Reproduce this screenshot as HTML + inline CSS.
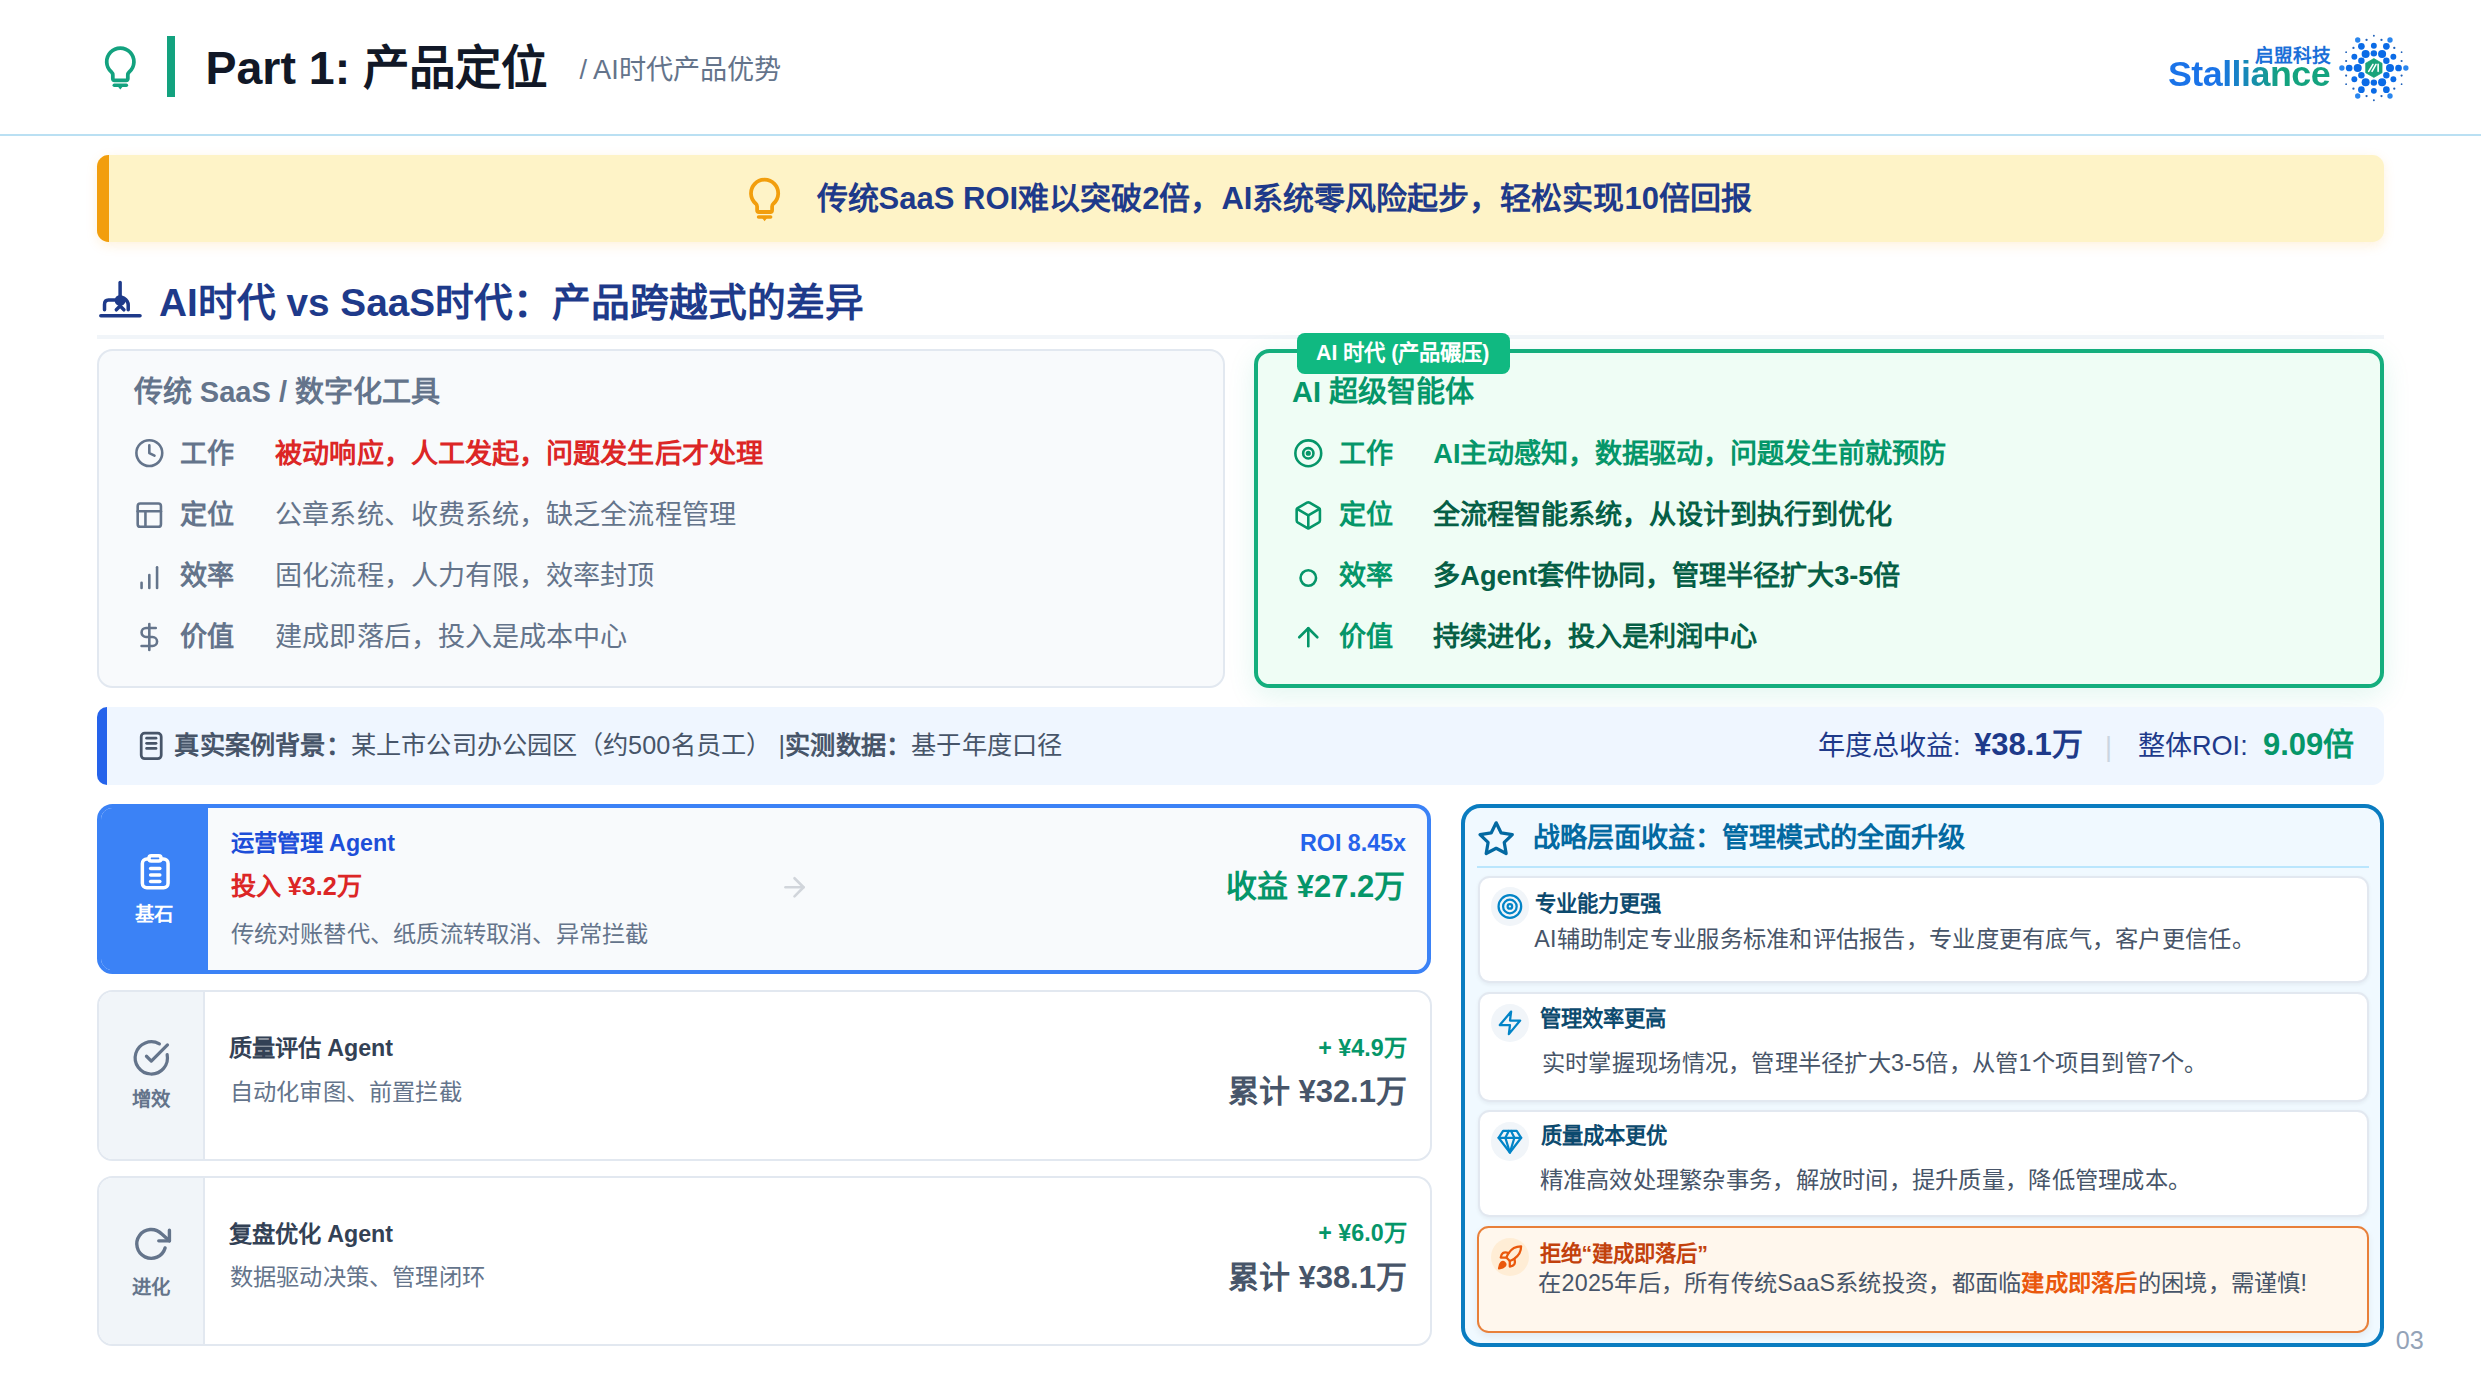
<!DOCTYPE html>
<html lang="zh-CN">
<head>
<meta charset="utf-8">
<style>
html,body{margin:0;padding:0;background:#fff;overflow:hidden;}
body{width:2481px;height:1395px;}
#s{position:relative;width:1280px;height:720px;zoom:1.93828;font-family:"Liberation Sans",sans-serif;color:#334155;}
.a{position:absolute;}
.t{position:absolute;line-height:1;white-space:nowrap;}
.b{font-weight:bold;}
#ov{position:absolute;left:0;top:0;width:1280px;height:719.7px;pointer-events:none;}
</style>
</head>
<body>
<div id="s">
<!-- HEADER -->
<div class="a" style="left:0;top:69px;width:1280px;height:1px;background:#bae0f3"></div>
<div class="a" style="left:86.2px;top:18.5px;width:4px;height:31.5px;background:#13a27f"></div>
<div class="t b" style="left:106px;top:23.1px;font-size:24px;color:#111827">Part 1: 产品定位</div>
<div class="t" style="left:299px;top:28.8px;font-size:14px;color:#64748b">/ AI时代产品优势</div>

<!-- BANNER -->
<div class="a" style="left:50px;top:80px;width:1180px;height:45px;background:#fef3c7;border-radius:6px;box-shadow:0 2px 6px rgba(245,158,11,0.13)"></div>
<div class="a" style="left:50px;top:80px;width:6px;height:45px;background:#f29e0d;border-radius:6px 0 0 6px"></div>
<div class="t b" style="left:421.3px;top:94.3px;font-size:16px;color:#1e3a8a">传统SaaS ROI难以突破2倍，AI系统零风险起步，轻松实现10倍回报</div>

<!-- SECTION TITLE -->
<div class="t b" style="left:82px;top:146.5px;font-size:20px;color:#1e3a8a">AI时代 vs SaaS时代：产品跨越式的差异</div>
<div class="a" style="left:50px;top:172.8px;width:1180px;height:2px;background:#f1f5f9"></div>

<!-- LEFT CARD -->
<div class="a" style="left:50px;top:180.3px;width:580px;height:172.7px;background:#f8fafc;border:1.05px solid #e2e8f0;border-radius:8px"></div>
<div class="t b" style="left:69px;top:195.2px;font-size:15px;color:#64748b">传统 SaaS / 数字化工具</div>
<div class="t b" style="left:93px;top:226.9px;font-size:14px;color:#64748b">工作</div>
<div class="t b" style="left:142px;top:226.9px;font-size:14px;color:#dc2626;letter-spacing:0.05px">被动响应，人工发起，问题发生后才处理</div>
<div class="t b" style="left:93px;top:258.5px;font-size:14px;color:#64748b">定位</div>
<div class="t" style="left:142px;top:258.5px;font-size:14px;color:#64748b;letter-spacing:0.05px">公章系统、收费系统，缺乏全流程管理</div>
<div class="t b" style="left:93px;top:290.0px;font-size:14px;color:#64748b">效率</div>
<div class="t" style="left:142px;top:290.0px;font-size:14px;color:#64748b;letter-spacing:0.05px">固化流程，人力有限，效率封顶</div>
<div class="t b" style="left:93px;top:321.5px;font-size:14px;color:#64748b">价值</div>
<div class="t" style="left:142px;top:321.5px;font-size:14px;color:#64748b;letter-spacing:0.05px">建成即落后，投入是成本中心</div>

<!-- RIGHT CARD -->
<div class="a" style="left:647px;top:180.3px;width:578.8px;height:170.3px;background:#effdf5;border:2.1px solid #14ae7d;border-radius:8px;box-shadow:0 4px 14px rgba(16,185,129,0.12)"></div>
<div class="a" style="left:669px;top:172px;width:110px;height:20.8px;background:#10b981;border-radius:4px"></div>
<div class="t b" style="left:679px;top:176.8px;font-size:11px;color:#fff">AI 时代 (产品碾压)</div>
<div class="t b" style="left:666.6px;top:195.2px;font-size:15px;color:#059669">AI 超级智能体</div>
<div class="t b" style="left:690.6px;top:226.9px;font-size:14px;color:#059669">工作</div>
<div class="t b" style="left:739.5px;top:226.9px;font-size:14px;color:#059669">AI主动感知，数据驱动，问题发生前就预防</div>
<div class="t b" style="left:690.6px;top:258.5px;font-size:14px;color:#059669">定位</div>
<div class="t b" style="left:739.5px;top:258.5px;font-size:14px;color:#065f46">全流程智能系统，从设计到执行到优化</div>
<div class="t b" style="left:690.6px;top:290.0px;font-size:14px;color:#059669">效率</div>
<div class="t b" style="left:739.5px;top:290.0px;font-size:14px;color:#065f46">多Agent套件协同，管理半径扩大3-5倍</div>
<div class="t b" style="left:690.6px;top:321.5px;font-size:14px;color:#059669">价值</div>
<div class="t b" style="left:739.5px;top:321.5px;font-size:14px;color:#065f46">持续进化，投入是利润中心</div>

<!-- CASE BAR -->
<div class="a" style="left:50px;top:364.7px;width:1180px;height:40.1px;background:#eff6ff;border-radius:6px"></div>
<div class="a" style="left:50px;top:364.7px;width:5px;height:40.1px;background:#2563eb;border-radius:6px 0 0 6px"></div>
<div class="t" style="left:90px;top:378px;font-size:13px;color:#475569;letter-spacing:0.1px"><span class="b" style="color:#475569">真实案例背景：</span>某上市公司办公园区（约500名员工） |<span class="b" style="color:#475569">实测数据：</span>基于年度口径</div>
<div class="t" style="left:938px;top:377.6px;font-size:14px;color:#1e3a8a">年度总收益: </div>
<div class="t b" style="left:1018.5px;top:376.1px;font-size:16px;color:#1e3a8a">¥38.1万</div>
<div class="t" style="left:1086px;top:378px;font-size:14px;color:#cbd5e1">|</div>
<div class="t" style="left:1103px;top:377.6px;font-size:14px;color:#1e3a8a">整体ROI: </div>
<div class="t b" style="left:1167.5px;top:376.1px;font-size:16px;color:#059669">9.09倍</div>

<!-- AGENT CARD 1 -->
<div class="a" style="left:50px;top:414.9px;width:684px;height:83.5px;background:#f8fafc;border:2.1px solid #3b82f6;border-radius:8px;overflow:hidden">
  <div class="a" style="left:0;top:0;width:55.2px;height:100%;background:#3b82f6"></div>
</div>
<div class="t b" style="left:69.4px;top:467.1px;font-size:10px;color:#fff">基石</div>
<div class="t b" style="left:119px;top:429.2px;font-size:12px;color:#1d4ed8">运营管理 Agent</div>
<div class="t b" style="left:119px;top:450.7px;font-size:13px;color:#dc2626">投入 ¥3.2万</div>
<div class="t" style="left:119px;top:476.3px;font-size:12px;color:#64748b;letter-spacing:0.11px">传统对账替代、纸质流转取消、异常拦截</div>
<div class="t b" style="right:554.6px;top:429.2px;font-size:12px;color:#2563eb;text-align:right">ROI 8.45x</div>
<div class="t b" style="right:555px;top:449.3px;font-size:16px;color:#059669;text-align:right">收益 ¥27.2万</div>

<!-- AGENT CARD 2 -->
<div class="a" style="left:50px;top:511px;width:686.5px;height:85.7px;background:#fff;border:1.05px solid #e2e8f0;border-radius:8px;overflow:hidden">
  <div class="a" style="left:0;top:0;width:53.7px;height:100%;background:#f1f5f9;border-right:1.05px solid #e2e8f0"></div>
</div>
<div class="t b" style="left:68.2px;top:562.6px;font-size:10px;color:#64748b">增效</div>
<div class="t b" style="left:118px;top:535.1px;font-size:12px;color:#334155">质量评估 Agent</div>
<div class="t" style="left:118.5px;top:557.5px;font-size:12px;color:#64748b;letter-spacing:0.11px">自动化审图、前置拦截</div>
<div class="t b" style="right:554.3px;top:534.8px;font-size:12px;color:#059669">+ ¥4.9万</div>
<div class="t b" style="right:554.1px;top:555.2px;font-size:16px;color:#475569">累计 ¥32.1万</div>

<!-- AGENT CARD 3 -->
<div class="a" style="left:50px;top:606.7px;width:686.5px;height:85.8px;background:#fff;border:1.05px solid #e2e8f0;border-radius:8px;overflow:hidden">
  <div class="a" style="left:0;top:0;width:53.7px;height:100%;background:#f1f5f9;border-right:1.05px solid #e2e8f0"></div>
</div>
<div class="t b" style="left:68.2px;top:659.1px;font-size:10px;color:#64748b">进化</div>
<div class="t b" style="left:118px;top:631px;font-size:12px;color:#334155">复盘优化 Agent</div>
<div class="t" style="left:118.5px;top:653.3px;font-size:12px;color:#64748b;letter-spacing:0.11px">数据驱动决策、管理闭环</div>
<div class="t b" style="right:554.3px;top:630.6px;font-size:12px;color:#059669">+ ¥6.0万</div>
<div class="t b" style="right:554.1px;top:651.2px;font-size:16px;color:#475569">累计 ¥38.1万</div>

<!-- RIGHT PANEL -->
<div class="a" style="left:754px;top:414.7px;width:471.9px;height:275.9px;background:#f0f9ff;border:2.1px solid #0a7cc0;border-radius:10px"></div>
<div class="t b" style="left:791px;top:425px;font-size:14px;color:#0369a1">战略层面收益：管理模式的全面升级</div>
<div class="a" style="left:762px;top:446.7px;width:460px;height:1px;background:#bae6fd"></div>

<div class="a" style="left:762.4px;top:451.7px;width:458px;height:53.2px;background:#fff;box-shadow:0 1px 2px rgba(15,23,42,0.05);border:1.05px solid #e2e8f0;border-radius:6px"></div>
<div class="a" style="left:769.1px;top:457.8px;width:19.8px;height:19.8px;background:#f1f5f9;border-radius:50%"></div>
<div class="t b" style="left:792px;top:461px;font-size:11px;color:#0c4a6e">专业能力更强</div>
<div class="t" style="left:791.5px;top:478.7px;font-size:12px;color:#475569;letter-spacing:0.14px">AI辅助制定专业服务标准和评估报告，专业度更有底气，客户更信任。</div>

<div class="a" style="left:762.4px;top:511.8px;width:458px;height:54.6px;background:#fff;box-shadow:0 1px 2px rgba(15,23,42,0.05);border:1.05px solid #e2e8f0;border-radius:6px"></div>
<div class="a" style="left:769.1px;top:518px;width:19.8px;height:19.8px;background:#f1f5f9;border-radius:50%"></div>
<div class="t b" style="left:794.5px;top:520.8px;font-size:11px;color:#0c4a6e">管理效率更高</div>
<div class="t" style="left:795.5px;top:542.6px;font-size:12px;color:#475569;letter-spacing:0.14px">实时掌握现场情况，管理半径扩大3-5倍，从管1个项目到管7个。</div>

<div class="a" style="left:762.4px;top:572.6px;width:458px;height:53.4px;background:#fff;box-shadow:0 1px 2px rgba(15,23,42,0.05);border:1.05px solid #e2e8f0;border-radius:6px"></div>
<div class="a" style="left:769.1px;top:579.1px;width:19.8px;height:19.8px;background:#f1f5f9;border-radius:50%"></div>
<div class="t b" style="left:795px;top:580.9px;font-size:11px;color:#0c4a6e">质量成本更优</div>
<div class="t" style="left:794.3px;top:602.9px;font-size:12px;color:#475569;letter-spacing:0.14px">精准高效处理繁杂事务，解放时间，提升质量，降低管理成本。</div>

<div class="a" style="left:761.9px;top:632.6px;width:458.5px;height:53.3px;background:#fff7ed;border:1.05px solid #e8803a;box-shadow:0 2px 4px rgba(15,23,42,0.06);border-radius:6px"></div>
<div class="a" style="left:769.1px;top:638.5px;width:19.8px;height:19.8px;background:#ffedd5;border-radius:50%"></div>
<div class="t b" style="left:794.3px;top:641.7px;font-size:11px;color:#c2410c">拒绝“建成即落后”</div>
<div class="t" style="left:793.6px;top:656.4px;font-size:12px;color:#475569;letter-spacing:0.14px">在2025年后，所有传统SaaS系统投资，都面临<span class="b" style="color:#ea580c">建成即落后</span>的困境，需谨慎!</div>

<div class="t" style="left:1236px;top:685px;font-size:13px;color:#94a3b8">03</div>

<!-- LOGO TEXT -->
<div class="t b" style="left:1163.3px;top:24px;font-size:9.65px;color:#1a6fd8">启盟科技</div>
<div class="t b" style="left:1118.5px;top:29.3px;font-size:18.5px;letter-spacing:-0.27px;background:linear-gradient(90deg,#1a73e8 0%,#1a73e8 30%,#14a37f 70%,#14a37f 100%);-webkit-background-clip:text;background-clip:text;color:transparent">Stalliance</div>

<!-- ICON OVERLAY (target px coordinates) -->
<svg id="ov" viewBox="0 0 2481 1395">
<g transform="translate(103,45)"><path d="M9.8 33.6 V30 Q9.8 28.3 8.3 26.9 A13.6 13.6 0 1 1 26.3 26.9 Q24.8 28.3 24.8 30 V33.6 Q24.8 35.4 23 35.4 H11.6 Q9.8 35.4 9.8 33.6 Z" fill="none" stroke="#13a27f" stroke-width="3.76" stroke-linejoin="round"/><rect x="9.5" y="38.6" width="15.6" height="3.5" rx="1.75" fill="#13a27f"/><path d="M14.8 41.5 H19.8 L17.3 44.6 Z" fill="#13a27f"/></g>
<g transform="translate(747.3,176.6)"><path d="M9.8 33.6 V30 Q9.8 28.3 8.3 26.9 A13.6 13.6 0 1 1 26.3 26.9 Q24.8 28.3 24.8 30 V33.6 Q24.8 35.4 23 35.4 H11.6 Q9.8 35.4 9.8 33.6 Z" fill="none" stroke="#f29e0d" stroke-width="3.76" stroke-linejoin="round"/><rect x="9.5" y="38.6" width="15.6" height="3.5" rx="1.75" fill="#f29e0d"/><path d="M14.8 41.5 H19.8 L17.3 44.6 Z" fill="#f29e0d"/></g>
<g fill="none" stroke="#1e3a8a" stroke-width="3.5" stroke-linecap="round" stroke-linejoin="round"><path d="M120.1 282.4 V295.3"/><path d="M115.3 300.1 H108.5 Q104.5 300.1 104.5 304.5 V309.8"/><path d="M124 298.2 Q128.2 301 128.2 305 V309.8"/><path d="M116.3 309.8 L120.1 306 L123.9 309.8"/><path d="M100.8 315.7 H140"/></g><circle cx="120.1" cy="300.4" r="5.4" fill="#1e3a8a"/>
<g transform="translate(133.79376000000002,437.59376000000003) scale(1.2921866666666666)" fill="none" stroke="#64748b" stroke-width="2" stroke-linecap="round" stroke-linejoin="round"><circle cx="12" cy="12" r="10"/><polyline points="12 6 12 12 16 14"/></g>
<g transform="translate(133.79376000000002,499.69376000000005) scale(1.2921866666666666)" fill="none" stroke="#64748b" stroke-width="2" stroke-linecap="round" stroke-linejoin="round"><rect x="3" y="3" width="18" height="18" rx="2"/><path d="M3 9h18"/><path d="M9 21V9"/></g>
<g transform="translate(133.79376000000002,562.09376) scale(1.2921866666666666)" fill="none" stroke="#64748b" stroke-width="2" stroke-linecap="round" stroke-linejoin="round"><path d="M12 20V10"/><path d="M18 20V4"/><path d="M6 20v-4"/></g>
<g transform="translate(133.79376000000002,621.49376) scale(1.2921866666666666)" fill="none" stroke="#64748b" stroke-width="2" stroke-linecap="round" stroke-linejoin="round"><path d="M12 2v20"/><path d="M17 5H9.5a3.5 3.5 0 0 0 0 7h5a3.5 3.5 0 0 1 0 7H6"/></g>
<g transform="translate(1292.79376,437.79376) scale(1.2921866666666666)" fill="none" stroke="#059669" stroke-width="2" stroke-linecap="round" stroke-linejoin="round"><circle cx="12" cy="12" r="10"/><circle cx="12" cy="12" r="4"/><circle cx="12" cy="12" r="1" fill="#059669"/></g>
<g transform="translate(1292.79376,499.79375999999996) scale(1.2921866666666666)" fill="none" stroke="#059669" stroke-width="2" stroke-linecap="round" stroke-linejoin="round"><path d="M21 8a2 2 0 0 0-1-1.73l-7-4a2 2 0 0 0-2 0l-7 4A2 2 0 0 0 3 8v8a2 2 0 0 0 1 1.73l7 4a2 2 0 0 0 2 0l7-4A2 2 0 0 0 21 16Z"/><path d="m3.3 7 8.7 5 8.7-5"/><path d="M12 22V12"/></g>
<g transform="translate(1292.79376,562.49376) scale(1.2921866666666666)" fill="none" stroke="#059669" stroke-width="2" stroke-linecap="round" stroke-linejoin="round"><circle cx="12" cy="12" r="6"/></g>
<g transform="translate(1292.79376,621.7937599999999) scale(1.2921866666666666)" fill="none" stroke="#059669" stroke-width="2" stroke-linecap="round" stroke-linejoin="round"><path d="m5 12 7-7 7 7"/><path d="M12 19V5"/></g>
<g fill="none" stroke="#475569" stroke-width="2.74" stroke-linecap="round"><rect x="141.2" y="733.2" width="20" height="25.5" rx="3.5"/><path d="M146.6 738.2 H156"/><path d="M146.6 743.3 H156"/><path d="M146.6 748.4 H156"/></g>
<g fill="none" stroke="#ffffff" stroke-width="3.5" stroke-linecap="round"><rect x="142.35" y="858.95" width="25.7" height="28.8" rx="4.5"/><rect x="149" y="855.7" width="12" height="5.3" rx="2.2" fill="#3b82f6"/><path d="M150.6 868.6 H159.8"/><path d="M150.6 875.1 H159.8"/><path d="M150.6 881.6 H159.8"/></g>
<g transform="translate(131.9172,1038.5172) scale(1.6152333333333333)" fill="none" stroke="#64748b" stroke-width="2" stroke-linecap="round" stroke-linejoin="round"><path d="M21.801 10A10 10 0 1 1 17 3.335"/><path d="m9 11 3 3L22 4"/></g>
<g fill="none" stroke="#64748b" stroke-width="3.4" stroke-linecap="round" stroke-linejoin="round"><path d="M165.06 1247.98 A14.43 14.43 0 1 1 161.5 1233.8 L169.4 1240.88"/><path d="M169.4 1230.2 V1240.88 H158.75"/></g>
<g transform="translate(778.99376,871.7937599999999) scale(1.2921866666666666)" fill="none" stroke="#d1d5db" stroke-width="2" stroke-linecap="round" stroke-linejoin="round"><path d="M5 12h14"/><path d="m12 5 7 7-7 7"/></g>
<g transform="translate(1476.8,819.6) scale(1.6152333333333333)" fill="none" stroke="#0369a1" stroke-width="2" stroke-linecap="round" stroke-linejoin="round"><polygon points="12 2 15.09 8.26 22 9.27 17 14.14 18.18 21.02 12 17.77 5.82 21.02 7 14.14 2 9.27 8.91 8.26 12 2"/></g>
<g transform="translate(1496.33204,892.93204) scale(1.1306633333333334)" fill="none" stroke="#0284c7" stroke-width="2" stroke-linecap="round" stroke-linejoin="round"><circle cx="12" cy="12" r="10"/><circle cx="12" cy="12" r="6"/><circle cx="12" cy="12" r="2"/></g>
<g transform="translate(1496.43204,1009.28204) scale(1.1306633333333334)" fill="none" stroke="#0284c7" stroke-width="2" stroke-linecap="round" stroke-linejoin="round"><polygon points="13 2 3 14 12 14 11 22 21 10 12 10 13 2"/></g>
<g transform="translate(1496.33204,1127.6167083333332) scale(1.1306633333333334)" fill="none" stroke="#0284c7" stroke-width="2" stroke-linecap="round" stroke-linejoin="round"><polygon points="6 3 18 3 22 9 12 22 2 9"/><path d="m12 22 4-13-3-6"/><path d="M11 3 8 9l4 13"/><path d="M2 9h20"/></g>
<g transform="translate(1496.2320399999999,1244.0320399999998) scale(1.1306633333333334)" fill="none" stroke="#ea580c" stroke-width="2" stroke-linecap="round" stroke-linejoin="round"><path d="M4.5 16.5c-1.5 1.26-2 5-2 5s3.74-.5 5-2c.71-.84.7-2.13-.09-2.91a2.18 2.18 0 0 0-2.91-.09z" fill="#ea580c"/><path d="m12 15-3-3a22 22 0 0 1 2-3.95A12.88 12.88 0 0 1 22 2c0 2.72-.78 7.5-6 11a22.35 22.35 0 0 1-4 2z"/><path d="M9 12H4s.55-3.03 2-4c1.62-1.08 5 0 5 0"/><path d="M12 15v5s3.03-.55 4-2c1.08-1.62 0-5 0-5"/></g>
<g transform="translate(2373.9,68) scale(0.06094) translate(-720,-705)"><circle cx="585" cy="475" r="66.0" fill="#0b6be6"/><circle cx="855" cy="475" r="66.0" fill="#0b6be6"/><circle cx="455" cy="705" r="66.0" fill="#0b6be6"/><circle cx="985" cy="705" r="66.0" fill="#0b6be6"/><circle cx="585" cy="940" r="66.0" fill="#0b6be6"/><circle cx="855" cy="940" r="66.0" fill="#0b6be6"/><circle cx="720" cy="465" r="52.8" fill="#0b6be6"/><circle cx="720" cy="945" r="52.8" fill="#0b6be6"/><circle cx="515" cy="585" r="52.8" fill="#0b6be6"/><circle cx="925" cy="585" r="52.8" fill="#0b6be6"/><circle cx="515" cy="825" r="52.8" fill="#0b6be6"/><circle cx="925" cy="825" r="52.8" fill="#0b6be6"/><circle cx="315" cy="705" r="55.0" fill="#0b6be6"/><circle cx="1125" cy="705" r="55.0" fill="#0b6be6"/><circle cx="515" cy="350" r="55.0" fill="#0b6be6"/><circle cx="925" cy="350" r="55.0" fill="#0b6be6"/><circle cx="515" cy="1060" r="55.0" fill="#0b6be6"/><circle cx="925" cy="1060" r="55.0" fill="#0b6be6"/><circle cx="400" cy="520" r="48.4" fill="#0b6be6"/><circle cx="1040" cy="520" r="48.4" fill="#0b6be6"/><circle cx="400" cy="890" r="48.4" fill="#0b6be6"/><circle cx="1040" cy="890" r="48.4" fill="#0b6be6"/><circle cx="720" cy="340" r="48.4" fill="#0b6be6"/><circle cx="720" cy="1080" r="48.4" fill="#0b6be6"/><circle cx="195" cy="705" r="44.0" fill="#2a86ee"/><circle cx="1245" cy="705" r="44.0" fill="#2a86ee"/><circle cx="455" cy="245" r="44.0" fill="#2a86ee"/><circle cx="985" cy="245" r="44.0" fill="#2a86ee"/><circle cx="455" cy="1165" r="44.0" fill="#2a86ee"/><circle cx="985" cy="1165" r="44.0" fill="#2a86ee"/><circle cx="720" cy="175" r="15.4" fill="#1d5fb8"/><circle cx="720" cy="1235" r="15.4" fill="#1d5fb8"/><circle cx="600" cy="245" r="18.7" fill="#1d5fb8"/><circle cx="845" cy="245" r="18.7" fill="#1d5fb8"/><circle cx="600" cy="1165" r="18.7" fill="#1d5fb8"/><circle cx="845" cy="1165" r="18.7" fill="#1d5fb8"/><circle cx="385" cy="375" r="18.7" fill="#1d5fb8"/><circle cx="1055" cy="375" r="18.7" fill="#1d5fb8"/><circle cx="385" cy="1045" r="18.7" fill="#1d5fb8"/><circle cx="1055" cy="1045" r="18.7" fill="#1d5fb8"/><circle cx="265" cy="445" r="14.3" fill="#1d5fb8"/><circle cx="1175" cy="445" r="14.3" fill="#1d5fb8"/><circle cx="265" cy="970" r="14.3" fill="#1d5fb8"/><circle cx="1175" cy="970" r="14.3" fill="#1d5fb8"/><circle cx="265" cy="590" r="17.6" fill="#1d5fb8"/><circle cx="1175" cy="590" r="17.6" fill="#1d5fb8"/><circle cx="265" cy="830" r="17.6" fill="#1d5fb8"/><circle cx="1175" cy="830" r="17.6" fill="#1d5fb8"/><polygon points="720.0,550.0 854.2,627.5 854.2,782.5 720.0,860.0 585.8,782.5 585.8,627.5" fill="#1aa37a" stroke="#1aa37a" stroke-width="12" stroke-linejoin="round"/><path d="M635 760 L705 645 M690 760 L755 645 M790 645 V760" stroke="#fff" stroke-width="26" stroke-linecap="round" fill="none"/></g>
</svg>
</div>
</body>
</html>
